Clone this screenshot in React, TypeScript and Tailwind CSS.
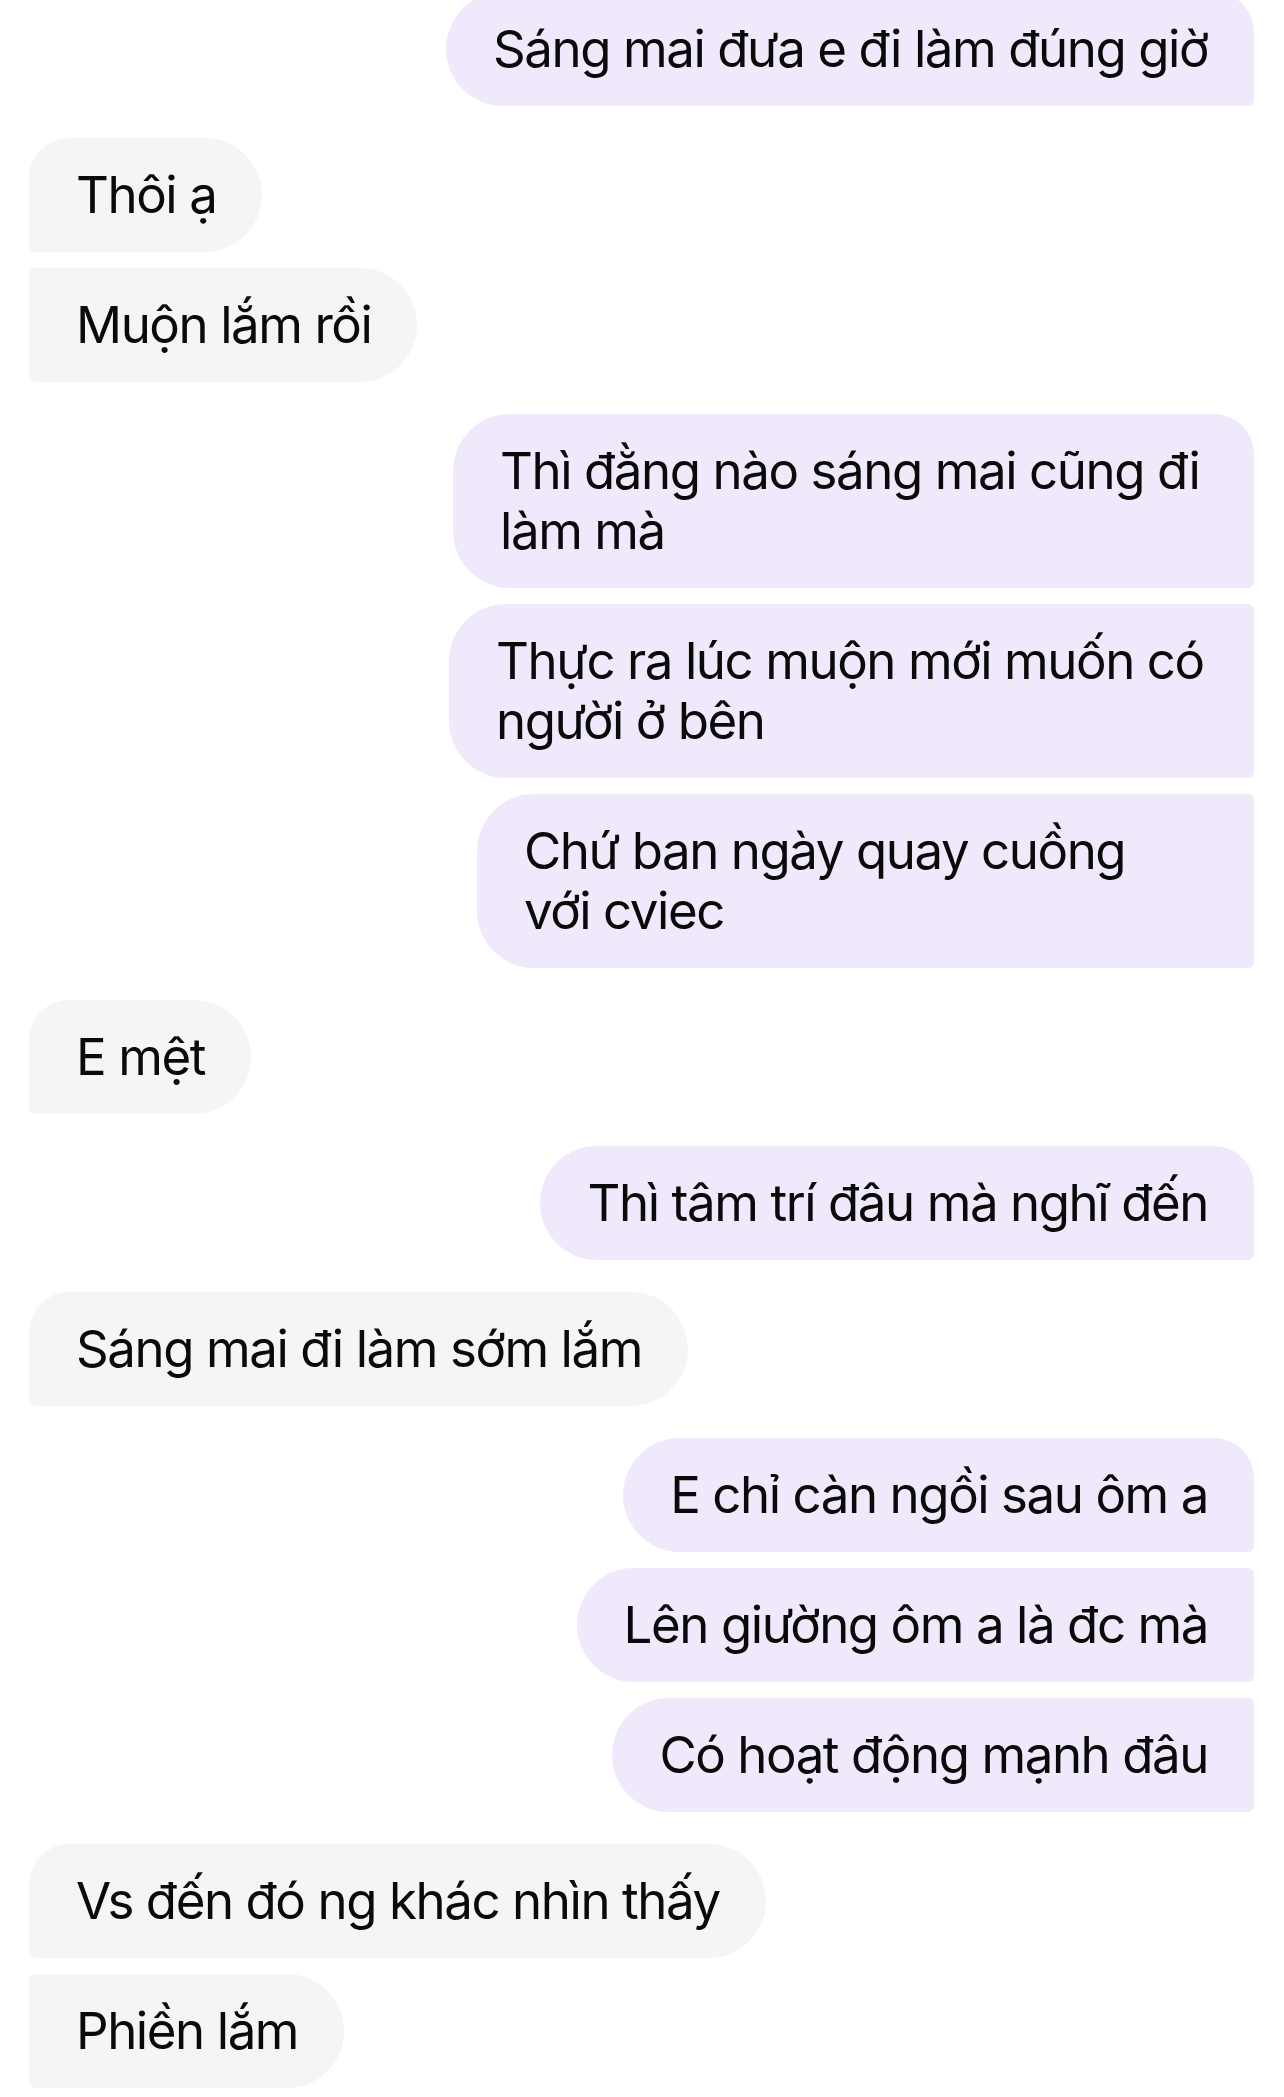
import React from 'react';

type Msg = {
  side: 'l' | 'r';
  lines: string[];
  first?: boolean;
  width?: string;
  gap: 'sm' | 'lg' | 'none';
};

const messages: Msg[] = [
  { side: 'r', lines: ['Sáng mai đưa e đi làm đúng giờ'], first: true, gap: 'none' },
  { side: 'l', lines: ['Thôi ạ'], first: true, gap: 'lg' },
  { side: 'l', lines: ['Muộn lắm rồi'], gap: 'sm' },
  { side: 'r', lines: ['Thì đằng nào sáng mai cũng đi', 'làm mà'], first: true, width: 'w-[801px]', gap: 'lg' },
  { side: 'r', lines: ['Thực ra lúc muộn mới muốn có', 'người ở bên'], width: 'w-[805px]', gap: 'sm' },
  { side: 'r', lines: ['Chứ ban ngày quay cuồng', 'với cviec'], width: 'w-[777px]', gap: 'sm' },
  { side: 'l', lines: ['E mệt'], first: true, gap: 'lg' },
  { side: 'r', lines: ['Thì tâm trí đâu mà nghĩ đến'], first: true, gap: 'lg' },
  { side: 'l', lines: ['Sáng mai đi làm sớm lắm'], first: true, gap: 'lg' },
  { side: 'r', lines: ['E chỉ càn ngồi sau ôm a'], first: true, gap: 'lg' },
  { side: 'r', lines: ['Lên giường ôm a là đc mà'], gap: 'sm' },
  { side: 'r', lines: ['Có hoạt động mạnh đâu'], gap: 'sm' },
  { side: 'l', lines: ['Vs đến đó ng khác nhìn thấy'], first: true, gap: 'lg' },
  { side: 'l', lines: ['Phiền lắm'], gap: 'sm' },
];

const Bubble = ({ msg }: { msg: Msg }) => {
  const isRight = msg.side === 'r';
  const shape = isRight
    ? msg.first
      ? 'rounded-l-[57px] rounded-tr-[40px] rounded-br-[6px] bg-[#efe9fb]'
      : 'rounded-l-[57px] rounded-tr-[6px] rounded-br-[6px] bg-[#efe9fb]'
    : msg.first
      ? 'rounded-r-[57px] rounded-tl-[40px] rounded-bl-[6px] bg-[#f5f5f5]'
      : 'rounded-r-[57px] rounded-tl-[6px] rounded-bl-[6px] bg-[#f5f5f5]';
  const gap = msg.gap === 'lg' ? 'mt-[32px]' : msg.gap === 'sm' ? 'mt-[16px]' : '-mt-[8px]';

  return (
    <div className={`flex ${isRight ? 'justify-end' : 'justify-start'} ${gap}`}>
      <div
        className={`${shape} ${msg.width ?? ''} pl-[47px] pr-[46px] py-[27px] text-[51px] leading-[60px] tracking-[-0.028em] text-[#0a0a0a] whitespace-nowrap`}
      >
        {msg.lines.map((line, i) => (
          <div key={i}>{line}</div>
        ))}
      </div>
    </div>
  );
};

export default function App() {
  return (
    <div
      className="w-[1284px] h-[2097px] overflow-hidden bg-white pl-[29px] pr-[30px]"
      style={{ fontFamily: 'Inter, "Noto Sans", "Liberation Sans", sans-serif' }}
    >
      {messages.map((m, i) => (
        <Bubble key={i} msg={m} />
      ))}
    </div>
  );
}
